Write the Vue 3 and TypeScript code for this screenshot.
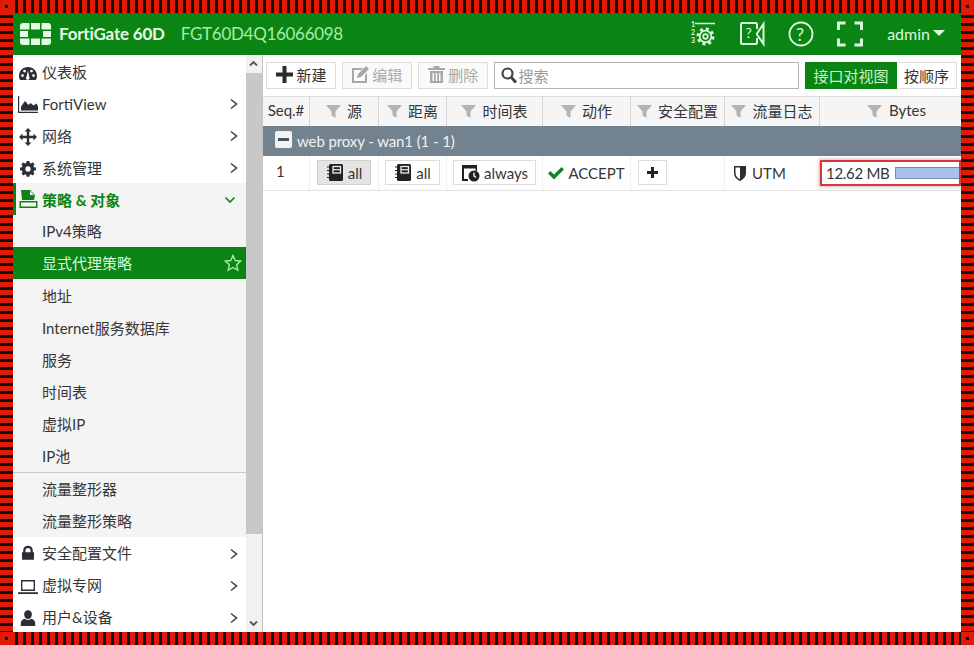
<script setup lang="ts">
interface NavItem {
  label: string
  icon?: string
  arrow?: 'right' | 'down'
  star?: boolean
}

const topItems: NavItem[] = [
  { label: '仪表板', icon: 'gauge' },
  { label: 'FortiView', icon: 'chart', arrow: 'right' },
  { label: '网络', icon: 'move', arrow: 'right' },
  { label: '系统管理', icon: 'gear', arrow: 'right' },
]

const subItems: NavItem[] = [
  { label: 'IPv4策略' },
  { label: '显式代理策略', star: true },
  { label: '地址' },
  { label: 'Internet服务数据库' },
  { label: '服务' },
  { label: '时间表' },
  { label: '虚拟IP' },
  { label: 'IP池' },
]

const subItems2: NavItem[] = [{ label: '流量整形器' }, { label: '流量整形策略' }]

const bottomItems: NavItem[] = [
  { label: '安全配置文件', icon: 'lock', arrow: 'right' },
  { label: '虚拟专网', icon: 'laptop', arrow: 'right' },
  { label: '用户&设备', icon: 'user', arrow: 'right' },
]

const columns = ['源', '距离', '时间表', '动作', '安全配置', '流量日志', 'Bytes']

const iconPaths: Record<string, string> = {
  gauge:
    'M10 3C4.600 3 1 7.200 1 12c0 1.600.5 3 1.200 4h15.600c.7-1 1.200-2.400 1.200-4 0-4.800-3.600-9-9-9zM4.500 13a1.400 1.400 0 1 1 0-2.800 1.400 1.400 0 0 1 0 2.800zM6.500 8.500a1.400 1.400 0 1 1 0-2.800 1.400 1.400 0 0 1 0 2.800zM11.500 14a1.800 1.800 0 1 1-3-1.300L10 6.500l1.200 6.200c.2.400.3.800.3 1.300zM13.500 8.500a1.400 1.400 0 1 1 0-2.800 1.400 1.400 0 0 1 0 2.800zM15.500 13a1.400 1.400 0 1 1 0-2.800 1.400 1.400 0 0 1 0 2.800z',
  chart: 'M0 2h1.200v15.800H21V19H0zM3 16.500v-4L7 7l3.500 4 2-2 3 2.500 3-2 2 4v3z',
  move:
    'M10 1l3.400 3.500h-2.200v4.300h4.300V6.600L19 10l-3.500 3.400v-2.200h-4.300v4.300h2.200L10 19l-3.400-3.500h2.200v-4.300H4.500v2.200L1 10l3.500-3.400v2.200h4.300V4.500H6.600z',
  gear:
    'M8.300 0h3.400l.5 2.500 1.500.6 2.100-1.400 2.400 2.400-1.400 2.100.6 1.500 2.500.5v3.400l-2.500.5-.6 1.500 1.400 2.100-2.400 2.400-2.100-1.400-1.500.6-.5 2.500H8.300l-.5-2.500-1.500-.6-2.100 1.400-2.400-2.400 1.400-2.100-.6-1.500L0 11.700V8.300l2.500-.5.6-1.500-1.400-2.100 2.400-2.400 2.100 1.400 1.500-.6zM10 6.700a3.300 3.300 0 1 0 0 6.600 3.300 3.300 0 0 0 0-6.600z',
  lock:
    'M4 9V6.500C4 3.300 6.500 1 10 1s6 2.300 6 5.500V9h1.500v9.500h-15V9zM6.800 9h6.400V6.500c0-1.700-1.400-2.900-3.200-2.900S6.800 4.800 6.800 6.500z',
  laptop: 'M3 3h14v11H3zm1.400 1.400v8.200h11.200V4.400zM0 15.300h20V17H0z',
  user:
    'M10 1.500a4.300 4.300 0 0 1 4.300 4.700c0 2.700-1.900 5-4.300 5s-4.300-2.300-4.300-5A4.300 4.300 0 0 1 10 1.500zM6.500 10.800c1 1 2.200 1.500 3.500 1.500s2.500-.5 3.500-1.500c2.500.5 4.500 2.300 4.500 5v3H2v-3c0-2.700 2-4.500 4.500-5z',
  policy: 'M3 1h9l5 5-1 5H4zM12 2v4h4zM1.500 12h18v7h-18zM3 13.500v4h15v-4z',
}
</script>

<template>
  <div class="page">
    <header class="topbar">
      <svg class="logo" width="31" height="22" viewBox="0 0 31 22">
        <g fill="#e4fae4">
          <path d="M3 0h6.500v6.500H0V3a3 3 0 0 1 3-3z" />
          <rect x="11" y="0" width="9" height="6.500" />
          <path d="M21.500 0H28a3 3 0 0 1 3 3v3.500h-9.500z" />
          <rect x="0" y="8" width="8" height="6" />
          <rect x="23" y="8" width="8" height="6" />
          <path d="M0 15.500h9.500V22H3a3 3 0 0 1-3-3z" />
          <rect x="11" y="15.500" width="9" height="6.500" />
          <path d="M21.500 15.500H31V19a3 3 0 0 1-3 3h-6.500z" />
        </g>
      </svg>
      <span class="model">FortiGate 60D</span>
      <span class="serial">FGT60D4Q16066098</span>
      <div class="top-icons">
        <svg width="26" height="26" viewBox="0 0 26 26" fill="none" stroke="#dcf8dc">
          <path d="M5 2.500h20" stroke-width="1.500" />
          <g fill="#dcf8dc" stroke="none" font-family="Lato, sans-serif" font-size="7" font-weight="700">
            <text x="1" y="6">1</text>
            <text x="1" y="14">2</text>
            <text x="1" y="22">3</text>
          </g>
          <circle cx="15.500" cy="15.500" r="7.500" stroke-width="3" stroke-dasharray="3 2.900" />
          <circle cx="15.500" cy="15.500" r="5.800" stroke-width="1.700" />
          <circle cx="15.500" cy="15.500" r="2.300" stroke-width="1.700" />
        </svg>
        <svg width="26" height="26" viewBox="0 0 26 26" fill="none" stroke="#dcf8dc" stroke-width="2">
          <path d="M18 8V3.500a1.500 1.500 0 0 0-1.500-1.500h-13A1.500 1.500 0 0 0 2 3.500v18A1.500 1.500 0 0 0 3.500 23h13a1.500 1.500 0 0 0 1.500-1.500V17" />
          <path d="M18 12.500L24.500 3v20L18 13.500z" />
          <text x="6.500" y="16.500" fill="#dcf8dc" stroke="none" font-family="Lato, sans-serif" font-size="14">?</text>
        </svg>
        <svg width="26" height="26" viewBox="0 0 26 26" fill="none" stroke="#dcf8dc" stroke-width="1.800">
          <circle cx="13" cy="13" r="11.500" />
          <text x="8" y="19.500" fill="#dcf8dc" stroke="none" font-family="Lato, sans-serif" font-size="18">?</text>
        </svg>
        <svg width="26" height="26" viewBox="0 0 26 26" fill="none" stroke="#dcf8dc" stroke-width="3">
          <path d="M1.500 9V2h7M17.500 2h7v7M24.500 17.500v6.500h-7M8.500 24h-7v-6.500" />
        </svg>
      </div>
      <span class="admin">admin<i class="caret"></i></span>
    </header>

    <div class="body">
      <nav class="sidebar">
        <a v-for="item in topItems" :key="item.label" class="nav-row">
          <svg class="nav-icon" :class="`i-${item.icon}`" viewBox="0 0 20 20">
            <path :d="iconPaths[item.icon!]" fill-rule="evenodd" />
          </svg>
          <span>{{ item.label }}</span>
          <svg v-if="item.arrow" class="chev" width="10" height="12" viewBox="0 0 10 12">
            <path d="M2 1.500L7.500 6 2 10.500" />
          </svg>
        </a>

        <div class="group">
          <a class="nav-row group-head">
            <svg class="nav-icon i-policy" viewBox="0 0 20 20">
              <path :d="iconPaths.policy" fill-rule="evenodd" />
            </svg>
            <span>策略 &amp; 对象</span>
            <svg class="chev down" width="12" height="10" viewBox="0 0 12 10">
              <path d="M1.500 2.500L6 7l4.500-4.500" />
            </svg>
          </a>
          <a v-for="item in subItems" :key="item.label" class="nav-row sub" :class="{ active: item.star }">
            <span>{{ item.label }}</span>
            <svg v-if="item.star" class="star" width="18" height="18" viewBox="0 0 18 18">
              <path d="M9 1.500l2.300 5 5.400.6-4 3.700 1.100 5.400L9 13.500l-4.800 2.700 1.100-5.400-4-3.700 5.400-.6z" />
            </svg>
          </a>
          <div class="divider"></div>
          <a v-for="item in subItems2" :key="item.label" class="nav-row sub tight">
            <span>{{ item.label }}</span>
          </a>
        </div>

        <a v-for="item in bottomItems" :key="item.label" class="nav-row tight">
          <svg class="nav-icon" :class="`i-${item.icon}`" viewBox="0 0 20 20">
            <path :d="iconPaths[item.icon!]" fill-rule="evenodd" />
          </svg>
          <span>{{ item.label }}</span>
          <svg class="chev" width="10" height="12" viewBox="0 0 10 12">
            <path d="M2 1.500L7.500 6 2 10.500" />
          </svg>
        </a>
      </nav>

      <div class="scrollbar">
        <svg viewBox="0 0 15 18"><path d="M4 10.500l3.500-3.500 3.500 3.500" /></svg>
        <div class="thumb"></div>
        <svg viewBox="0 0 15 18" class="scroll-down"><path d="M4 7.500l3.500 3.500 3.500-3.500" /></svg>
      </div>

      <main class="main">
        <div class="toolbar">
          <button class="btn">
            <svg width="19" height="19" viewBox="0 0 19 19"><path d="M7.500 1h4v6.500H18v4h-6.500V18h-4v-6.500H1v-4h6.500z" fill="#2b2b2b" /></svg>
            新建
          </button>
          <button class="btn disabled">
            <svg width="19" height="19" viewBox="0 0 19 19" fill="#a8a8a8">
              <path d="M1 3h11l-2 2H3v11h11v-6l2-2v10H1z" />
              <path d="M15 1l3 3-8 8-4 1 1-4z" />
            </svg>
            编辑
          </button>
          <button class="btn disabled">
            <svg width="19" height="19" viewBox="0 0 19 19" fill="#a8a8a8">
              <path d="M7 1h5l1 2h5v2H1V3h5zM3 6h13v12H3zm2.500 2v8h1.500V8zm3.200 0v8h1.500V8zm3.300 0v8h1.500V8z" fill-rule="evenodd" />
            </svg>
            删除
          </button>
          <div class="search">
            <svg width="18" height="18" viewBox="0 0 18 18" fill="none" stroke="#444" stroke-width="2.200">
              <circle cx="7.500" cy="7.500" r="5" />
              <path d="M11 11l5 5.500" stroke-width="3" />
            </svg>
            <span>搜索</span>
          </div>
          <div class="view-toggle">
            <span class="on">接口对视图</span>
            <span class="off">按顺序</span>
          </div>
        </div>

        <div class="grid-row head">
          <div class="cell seq">Seq.#</div>
          <div v-for="col in columns" :key="col" class="cell">
            <svg class="funnel" width="15" height="15" viewBox="0 0 15 15"><path d="M0 1h15L9.500 7.500V14L5.500 11.500V7.500z" /></svg>
            {{ col }}
          </div>
        </div>

        <div class="section-row">
          <i class="minus"></i>
          web proxy - wan1 (1 - 1)
        </div>

        <div class="grid-row data">
          <div class="cell num">1</div>
          <div class="cell">
            <span class="chip selected">
              <svg width="18" height="19" viewBox="0 0 18 19">
                <rect x="3" y="1" width="14" height="17" rx="1.500" fill="#222" />
                <rect x="7" y="3.500" width="7.500" height="6.500" fill="none" stroke="#eee" stroke-width="1.300" />
                <path d="M7 6.700h7.500" stroke="#eee" stroke-width="1.200" />
                <path d="M1 4h3M1 7.500h3M1 11h3M1 14.500h3" stroke="#222" stroke-width="1.200" />
              </svg>
              all
            </span>
          </div>
          <div class="cell">
            <span class="chip">
              <svg width="18" height="19" viewBox="0 0 18 19">
                <rect x="3" y="1" width="14" height="17" rx="1.500" fill="#222" />
                <rect x="7" y="3.500" width="7.500" height="6.500" fill="none" stroke="#eee" stroke-width="1.300" />
                <path d="M7 6.700h7.500" stroke="#eee" stroke-width="1.200" />
                <path d="M1 4h3M1 7.500h3M1 11h3M1 14.500h3" stroke="#222" stroke-width="1.200" />
              </svg>
              all
            </span>
          </div>
          <div class="cell">
            <span class="chip sched">
              <svg width="20" height="18" viewBox="0 0 20 18">
                <path d="M1 1h15v6h-1.500V4.500H3V15h4v2H1z" />
                <circle cx="13" cy="12" r="5.500" />
                <path d="M13 8.500V12l2 1.500" fill="none" stroke="#fff" stroke-width="1.300" />
              </svg>
              always
            </span>
          </div>
          <div class="cell action">
            <svg width="16" height="14" viewBox="0 0 16 14"><path d="M0 7.500l2.500-2.500 3.500 3.500L13.500 1 16 3.500 6 13.500z" fill="#12852a" /></svg>
            ACCEPT
          </div>
          <div class="cell left">
            <span class="chip plus">
              <svg width="11" height="11" viewBox="0 0 11 11"><path d="M4 0h3v4h4v3H7v4H4V7H0V4h4z" fill="#222" /></svg>
            </span>
          </div>
          <div class="cell left utm">
            <svg width="14" height="17" viewBox="0 0 14 17">
              <path d="M1 1h12v7c0 4-3 6.500-6 8-3-1.500-6-4-6-8zM2.500 2.500V8c0 3 2 5 4.500 6.300V2.500z" fill="#2a2f36" fill-rule="evenodd" />
            </svg>
            UTM
          </div>
          <div class="cell bytes">
            <div class="bytes-box">
              <span class="bytes-num">12.62 MB</span>
              <div class="bar"></div>
            </div>
          </div>
        </div>
      </main>
    </div>
  </div>
</template>

<style>
html,
body {
  margin: 0;
  background: #fff;
}
</style>

<style scoped>
.page {
  --red: #e01a08;
  --stripe-x: repeating-linear-gradient(90deg, var(--red) 0 5px, #111 5px 8px);
  --stripe-y: repeating-linear-gradient(180deg, var(--red) 0 5px, #111 5px 8px);
  --dot: linear-gradient(#111, #111);
  --block: linear-gradient(var(--red), var(--red));
  width: 974px;
  height: 645px;
  box-sizing: border-box;
  padding: 13px;
  display: flex;
  flex-direction: column;
  overflow: hidden;
  font-family: Lato, "Noto Sans CJK SC", sans-serif;
  font-size: 15px;
  color: #363636;
  background:
    var(--dot) 5px 5px / 3px 3px no-repeat,
    var(--dot) calc(100% - 5px) 5px / 3px 3px no-repeat,
    var(--dot) 5px calc(100% - 5px) / 3px 3px no-repeat,
    var(--dot) calc(100% - 5px) calc(100% - 5px) / 3px 3px no-repeat,
    var(--block) 0 0 / 13px 13px no-repeat,
    var(--block) 100% 0 / 13px 13px no-repeat,
    var(--block) 0 100% / 13px 13px no-repeat,
    var(--block) 100% 100% / 13px 13px no-repeat,
    var(--stripe-x) 2px 0 / 100% 13px no-repeat,
    var(--stripe-x) 2px 100% / 100% 13px no-repeat,
    var(--stripe-y) 0 2px / 13px 100% no-repeat,
    var(--stripe-y) 100% 2px / 13px 100% no-repeat;
}

.topbar {
  height: 42px;
  flex: none;
  background: #0a8514;
  display: flex;
  align-items: center;
  padding-left: 7px;
}

.logo {
  margin-right: 8px;
}

.model {
  font-size: 17px;
  font-weight: 700;
  color: #e4fae4;
  margin-right: 16px;
  letter-spacing: -0.2px;
  padding-bottom: 2px;
}

.serial {
  font-size: 17px;
  color: #a6eca6;
  letter-spacing: -0.3px;
  padding-bottom: 2px;
}

.top-icons {
  margin-left: auto;
  display: flex;
  gap: 23px;
  margin-right: 24px;
}

.admin {
  font-size: 16px;
  color: #dcf8dc;
  margin-right: 16px;
  padding-bottom: 2px;
  display: flex;
  align-items: center;
}

.caret {
  width: 0;
  height: 0;
  margin-left: 3px;
  border-left: 6px solid transparent;
  border-right: 6px solid transparent;
  border-top: 6px solid #dcf8dc;
}

.body {
  flex: 1;
  display: flex;
  min-height: 0;
  background: #fff;
}

.sidebar {
  width: 233px;
  flex: none;
  overflow: hidden;
}

.nav-row {
  height: 32px;
  box-sizing: border-box;
  padding-top: 1px;
  display: flex;
  align-items: center;
  position: relative;
  padding-left: 29px;
}

.nav-row.tight,
.group-head + .sub,
.sub.active {
  padding-top: 0;
  padding-bottom: 1px;
}

.nav-icon {
  position: absolute;
  left: 5px;
  top: 7px;
  width: 20px;
  height: 20px;
  fill: #2a2f36;
}

.i-gauge {
  top: 9px;
}

.i-move {
  top: 8px;
}

.i-gear {
  left: 7px;
  top: 10px;
  width: 16px;
  height: 16px;
}

.i-policy {
  top: 6px;
}

.i-lock {
  left: 7px;
  top: 8px;
  width: 16px;
  height: 16px;
}

.i-laptop {
  top: 8px;
}

.i-user {
  left: 6px;
  top: 8px;
  width: 18px;
  height: 18px;
}

.chev {
  position: absolute;
  right: 7px;
  top: 11px;
  fill: none;
  stroke: #444;
  stroke-width: 1.600;
}

.chev.down {
  top: 12px;
  right: 10px;
  stroke: #0a8514;
}

.group {
  background: #f4f4f4;
}

.group-head {
  color: #0a8514;
  font-weight: 700;
  box-shadow: inset 3px 0 0 #0a8514;
}

.group-head .nav-icon {
  fill: #0a8514;
}

.sub.active {
  background: #0a8514;
  color: #dcf8dc;
}

.star {
  position: absolute;
  right: 4px;
  top: 7px;
  fill: none;
  stroke: #a6eca6;
  stroke-width: 1.400;
}

.divider {
  height: 1px;
  margin: 1px 0 0;
  background: #c8c8c8;
}

.scrollbar {
  width: 16px;
  flex: none;
  background: #f1f1f1;
  border-right: 1px solid #c4c4c4;
  display: flex;
  flex-direction: column;
}

.scrollbar svg {
  flex: none;
  width: 15px;
  height: 18px;
  fill: none;
  stroke: #555;
  stroke-width: 1.800;
}

.thumb {
  height: 461px;
  background: #c8c8c8;
}

.scroll-down {
  margin-top: auto;
}

.main {
  flex: 1;
  min-width: 0;
  background: #fff;
}

.toolbar {
  height: 41px;
  box-sizing: border-box;
  padding: 7px 4px 0 3px;
  display: flex;
  gap: 6px;
}

.btn {
  height: 27px;
  width: 70px;
  box-sizing: border-box;
  border: 1px solid #ddd;
  background: #fff;
  padding: 0 0 2px;
  display: flex;
  align-items: center;
  justify-content: center;
  gap: 2px;
  font: inherit;
  color: #333;
}

.btn.disabled {
  color: #a8a8a8;
  background: #fafafa;
}

.search {
  width: 306px;
  height: 27px;
  box-sizing: border-box;
  border: 1px solid #b4b4b4;
  display: flex;
  align-items: center;
  gap: 1px;
  padding: 0 0 1px 5px;
  color: #999;
}

.view-toggle {
  height: 27px;
  display: flex;
  width: 152px;
}

.view-toggle span {
  display: flex;
  align-items: center;
  justify-content: center;
  box-sizing: border-box;
  padding-bottom: 1px;
}

.on {
  width: 92px;
  background: #0a8514;
  color: #c8f4c8;
}

.off {
  width: 60px;
  border: 1px solid #ddd;
  border-left: 0;
  color: #333;
}

.grid-row {
  display: grid;
  grid-template-columns: 47px 69px 68px 96px 88px 94px 95px 141px;
}

.head {
  height: 30px;
  background: #f5f5f5;
  border-top: 1px solid #ddd;
  box-sizing: border-box;
}

.cell {
  display: flex;
  align-items: center;
  justify-content: center;
  gap: 6px;
  border-right: 1px solid #d4d4d4;
  box-sizing: border-box;
  white-space: nowrap;
}

.head .cell {
  padding-bottom: 3px;
}

.head .cell:last-child {
  border-right: 0;
  gap: 7px;
  padding-left: 12px;
}

.funnel {
  fill: #b2b4b6;
  flex: none;
  margin-top: 2px;
}

.section-row {
  height: 30px;
  background: #73828f;
  color: #eef2f4;
  display: flex;
  align-items: center;
  gap: 5px;
  padding-left: 12px;
  letter-spacing: -0.1px;
}

.minus {
  width: 17px;
  height: 17px;
  margin-top: -4px;
  box-sizing: border-box;
  border-radius: 2px;
  background: #f2f2f2;
  position: relative;
}

.minus::after {
  content: "";
  position: absolute;
  left: 3px;
  right: 3px;
  top: 7px;
  height: 3px;
  background: #4a545c;
}

.data {
  height: 35px;
  border-bottom: 1px solid #e2e2e2;
  box-sizing: border-box;
}

.data .cell {
  border-right-color: #f0f0f0;
}

.data .num {
  justify-content: flex-start;
  padding: 0 0 4px 13px;
}

.chip {
  height: 25px;
  box-sizing: border-box;
  border: 1px solid #ddd;
  background: #fff;
  display: inline-flex;
  align-items: center;
  gap: 4px;
  padding: 0 8px;
  margin-top: -1px;
}

.chip.selected {
  background: #e4e4e4;
  border-color: #d0d0d0;
}

.chip.sched {
  gap: 3px;
  padding: 0 7px;
}

.chip svg {
  fill: #222;
}

.chip.plus {
  width: 29px;
  justify-content: center;
  padding: 0;
}

.data .left {
  justify-content: flex-start;
  padding-left: 7px;
}

.data .utm {
  padding-left: 8px;
  gap: 5px;
}

.action {
  gap: 4px;
}

.bytes {
  border-right: 0;
  align-items: stretch;
  padding-top: 4px;
  padding-bottom: 4px;
}

.bytes-box {
  flex: 1;
  box-sizing: border-box;
  border: 2px solid #d8343c;
  box-shadow: 0 0 4px rgba(120, 40, 40, 0.5);
  display: flex;
  align-items: center;
  padding-left: 4px;
  gap: 6px;
}

.bytes-num {
  letter-spacing: -0.3px;
}

.bar {
  flex: 1;
  height: 10px;
  background: #a6c0f0;
  border: 1px solid #7c8ca8;
  border-right: 0;
}
</style>
